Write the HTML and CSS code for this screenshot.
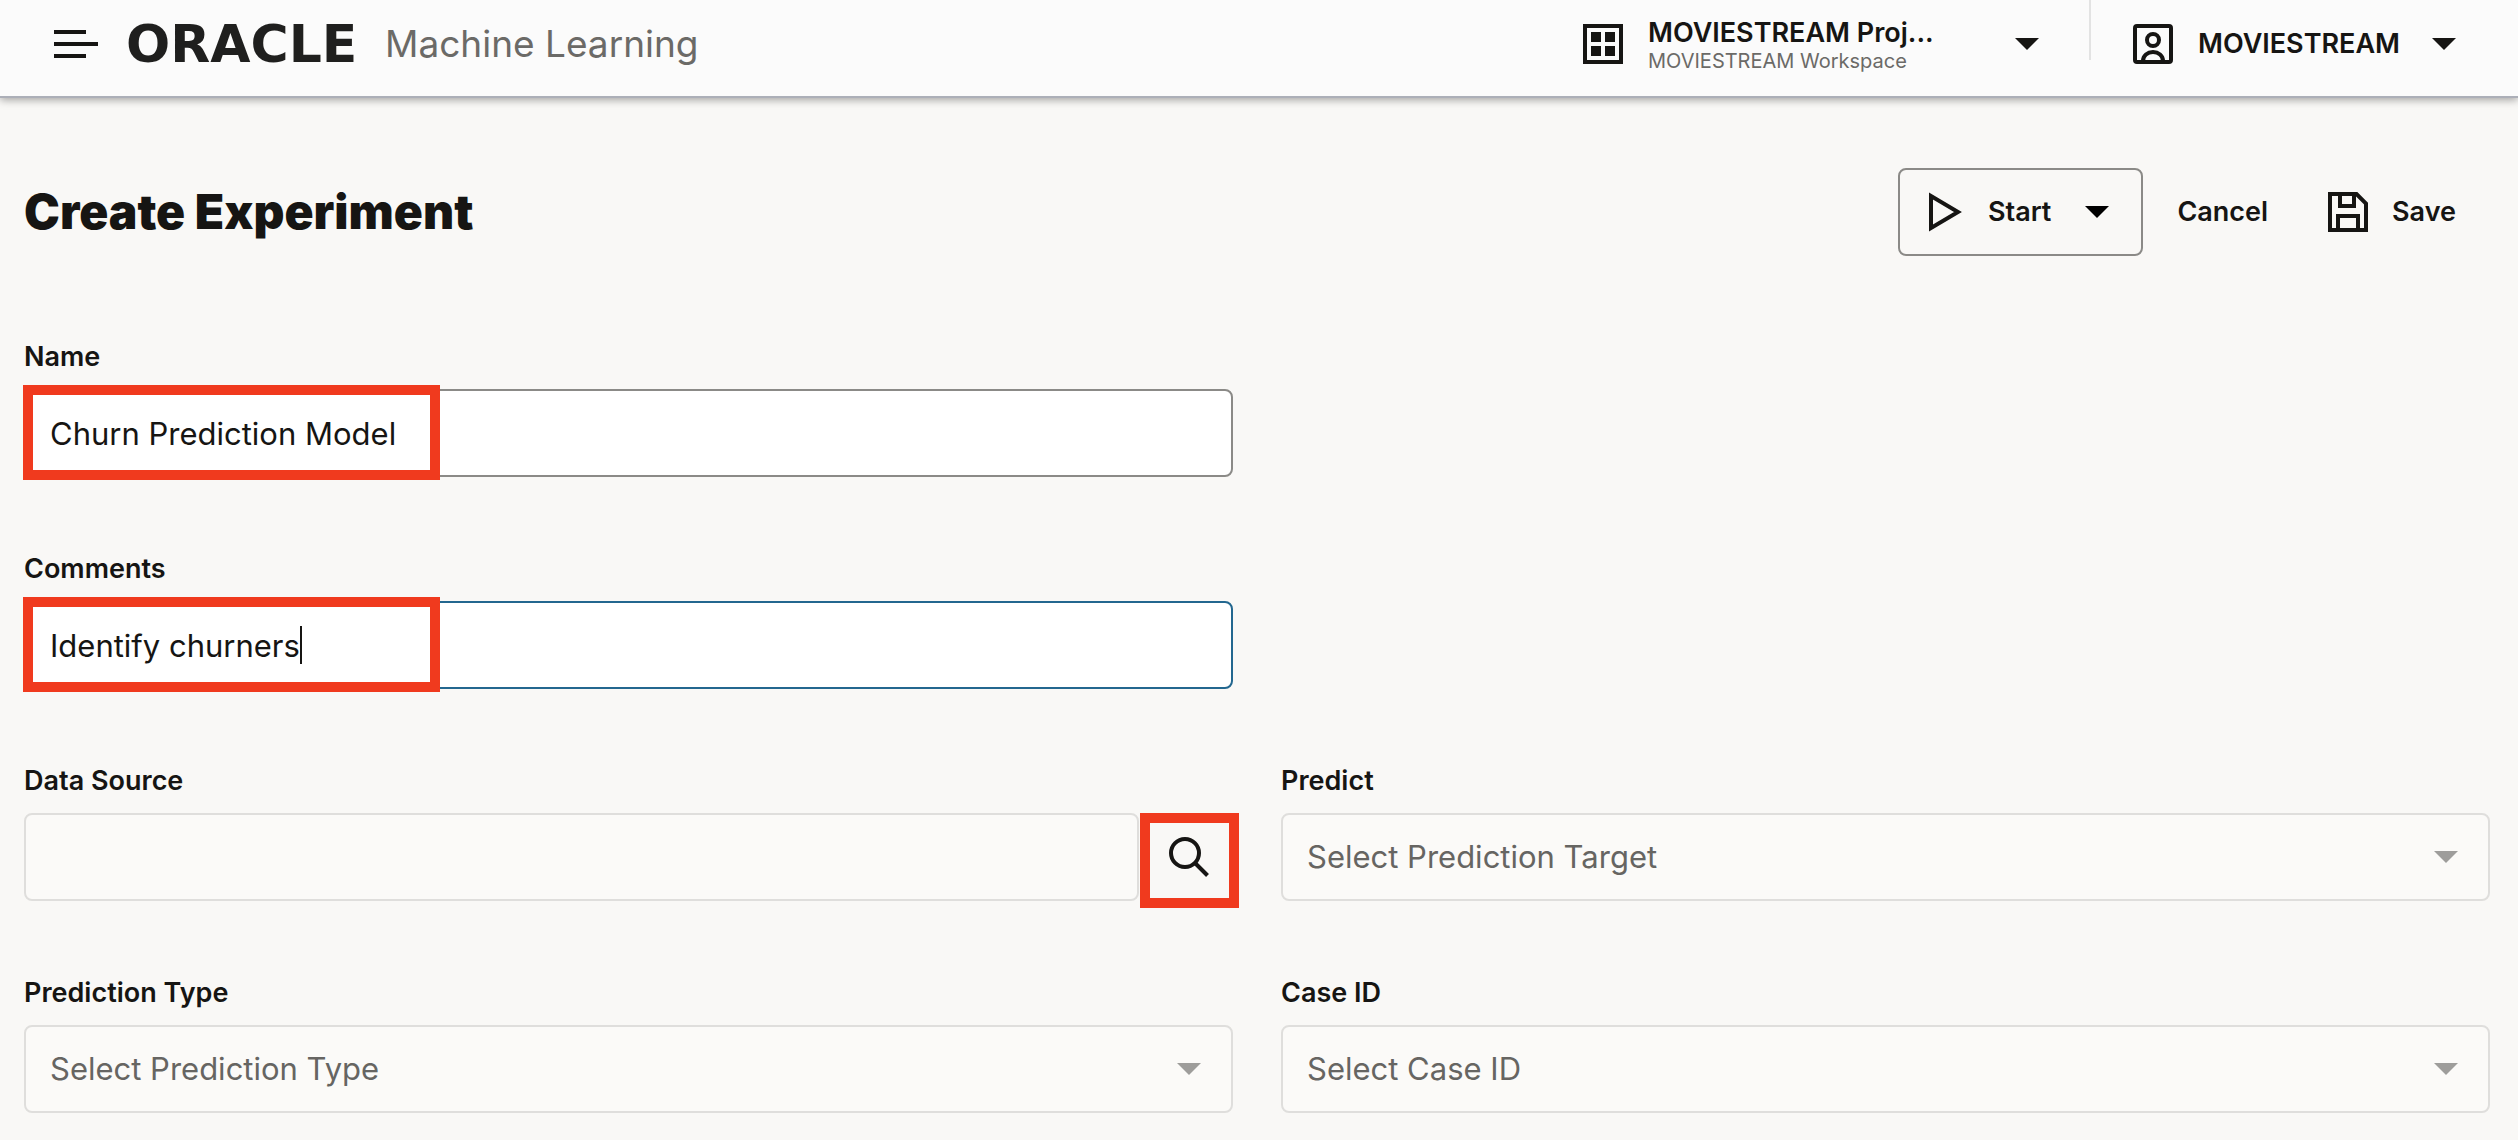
FILE: index.html
```html
<!DOCTYPE html>
<html lang="en">
<head>
  <meta charset="utf-8">
  <meta name="viewport" content="width=device-width, initial-scale=1">
  <title>Create Experiment - Oracle Machine Learning</title>
  <link rel="stylesheet" href="styles.css">
</head>
<body>
  <header class="topbar">
    <button class="bar-button menu-button" type="button" aria-label="Open navigation">
      <svg width="44" height="28" viewBox="0 0 44 28" aria-hidden="true"><path d="M0 0h32v4H0zM0 12h44v4H0zM0 24h32v4H0z"/></svg>
    </button>
    <a class="brand" href="#">
      <span class="brand-name">ORACLE</span>
      <span class="brand-product">Machine Learning</span>
    </a>
    <button class="bar-button project-button" type="button">
      <svg width="40" height="40" viewBox="0 0 40 40" aria-hidden="true"><path fill-rule="evenodd" d="M0 0h40v40H0zM4 4v32h32V4zM8 8h10v10H8zM22 8h10v10H22zM8 22h10v10H8zM22 22h10v10H22z"/></svg>
      <span class="project-text">
        <span class="project-name">MOVIESTREAM Proj...</span>
        <span class="project-workspace">MOVIESTREAM Workspace</span>
      </span>
      <svg class="caret" width="24" height="12" viewBox="0 0 24 12" aria-hidden="true"><path d="M0 0h24L12 12z"/></svg>
    </button>
    <span class="divider"></span>
    <button class="bar-button user-button" type="button">
      <svg width="40" height="40" viewBox="0 0 40 40" fill="none" stroke="#161513" stroke-width="4" aria-hidden="true"><rect x="2" y="2" width="36" height="36" rx="2"/><circle cx="20" cy="16" r="6"/><path d="M10 37c0-5.500 4.500-9 10-9s10 3.500 10 9"/></svg>
      <span class="user-name">MOVIESTREAM</span>
      <svg class="caret" width="24" height="12" viewBox="0 0 24 12" aria-hidden="true"><path d="M0 0h24L12 12z"/></svg>
    </button>
  </header>

  <main class="page">
    <div class="page-head">
      <h1 class="page-title">Create Experiment</h1>
      <div class="actions">
        <button class="action action-outlined" type="button">
          <svg width="36" height="40" viewBox="0 0 36 40" fill="none" stroke="#161513" stroke-width="4" aria-hidden="true"><path d="M3 4v32l27-16z"/></svg>
          <span>Start</span>
          <svg class="caret start-caret" width="24" height="12" viewBox="0 0 24 12" aria-hidden="true"><path d="M0 0h24L12 12z"/></svg>
        </button>
        <button class="action" type="button">Cancel</button>
        <button class="action action-save" type="button">
          <svg width="40" height="40" viewBox="0 0 40 40" fill="none" stroke="#161513" stroke-width="4" aria-hidden="true"><path d="M2 2h26.500L38 11.500V38H2z"/><path d="M12 2v12h14V2M10 38V24h20v14"/></svg>
          <span>Save</span>
        </button>
      </div>
    </div>

    <form class="form">
      <div class="field field-first">
        <label class="label" for="name">Name</label>
        <div class="control">
          <input class="box" id="name" type="text" value="Churn Prediction Model">
          <span class="highlight"></span>
        </div>
      </div>
      <div class="field field-first">
        <label class="label" for="comments">Comments</label>
        <div class="control">
          <input class="box box-active" id="comments" type="text" value="Identify churners">
          <span class="text-cursor"></span>
          <span class="highlight"></span>
        </div>
      </div>
      <div class="field field-first">
        <label class="label" for="source">Data Source</label>
        <div class="control control-search">
          <input class="box box-quiet" id="source" type="text" readonly>
          <button class="search-button" type="button" aria-label="Search data source">
            <svg width="40" height="40" viewBox="0 0 40 40" fill="none" stroke="#161513" stroke-width="4" aria-hidden="true"><circle cx="16" cy="16" r="14"/><path d="M26 26l12.500 12.500"/></svg>
          </button>
        </div>
      </div>
      <div class="field">
        <label class="label" for="predict">Predict</label>
        <div class="control control-select">
          <select class="box box-quiet" id="predict"><option>Select Prediction Target</option></select>
          <svg class="select-caret" width="24" height="12" viewBox="0 0 24 12" aria-hidden="true"><path d="M0 0h24L12 12z"/></svg>
        </div>
      </div>
      <div class="field">
        <label class="label" for="type">Prediction Type</label>
        <div class="control control-select">
          <select class="box box-quiet" id="type"><option>Select Prediction Type</option></select>
          <svg class="select-caret" width="24" height="12" viewBox="0 0 24 12" aria-hidden="true"><path d="M0 0h24L12 12z"/></svg>
        </div>
      </div>
      <div class="field">
        <label class="label" for="case">Case ID</label>
        <div class="control control-select">
          <select class="box box-quiet" id="case"><option>Select Case ID</option></select>
          <svg class="select-caret" width="24" height="12" viewBox="0 0 24 12" aria-hidden="true"><path d="M0 0h24L12 12z"/></svg>
        </div>
      </div>
    </form>
  </main>
</body>
</html>
```
FILE: styles.css
```css
* {
  box-sizing: border-box;
}

body {
  margin: 0;
  background: #f9f8f6;
  color: #161513;
  font-family: Inter, "Liberation Sans", sans-serif;
  font-size: 27px;
  line-height: 32px;
}

svg {
  display: block;
  flex: none;
}

button {
  border: 0;
  padding: 0;
  background: none;
  color: inherit;
  font: inherit;
  font-weight: 600;
}

/* Top bar */
.topbar {
  display: flex;
  align-items: center;
  height: 98px;
  padding: 0 62px 8px 54px;
  background: #fbfbfb;
  border-bottom: 2px solid #acafb8;
  box-shadow: 0 2px 8px rgba(0, 0, 0, 0.35);
}

.bar-button {
  display: flex;
  align-items: center;
  fill: #161513;
}

.brand {
  display: flex;
  align-items: center;
  margin-left: 28px;
  margin-right: auto;
  color: #1f1f1e;
  text-decoration: none;
  line-height: 56px;
}

.brand-name {
  min-width: 259px;
  font-family: "DejaVu Sans", sans-serif;
  font-size: 52px;
  font-weight: 700;
}

.brand-product {
  color: #6b6a67;
  font-size: 37px;
}

.project-text {
  display: flex;
  flex-direction: column;
  width: 367px;
  margin-left: 25px;
  padding-top: 2px;
  text-align: left;
}

.project-name {
  line-height: 32px;
}

.project-workspace {
  color: #6b6a67;
  font-size: 20px;
  font-weight: 400;
  line-height: 24px;
}

.divider {
  align-self: flex-start;
  width: 2px;
  height: 60px;
  margin: 0 42px 0 50px;
  background: #e3e3e3;
}

.user-name {
  margin: 0 32px 0 25px;
}

/* Title row */
.page {
  padding: 70px 28px 28px 24px;
}

.page-head {
  display: flex;
  align-items: center;
  justify-content: space-between;
  padding-right: 34px;
}

.page-title {
  margin: 0;
  font-size: 48px;
  font-weight: 900;
  line-height: 56px;
}

.actions {
  display: flex;
  align-items: center;
  gap: 34px;
}

.action {
  display: flex;
  align-items: center;
  height: 88px;
  gap: 24px;
}

.action-outlined {
  padding: 0 32px 0 28px;
  border: 2px solid #8b8a87;
  border-radius: 8px;
}

.start-caret {
  margin-left: 10px;
}

.action-save {
  margin-left: 26px;
}

/* Form */
.form {
  display: grid;
  grid-template-columns: 1fr 1fr;
  gap: 68px 48px;
  margin-top: 77px;
}

.field-first {
  grid-column: 1;
}

.label {
  display: block;
  height: 56px;
  line-height: 48px;
  font-weight: 600;
}

.control {
  position: relative;
}

.box {
  display: block;
  width: 100%;
  height: 88px;
  padding: 0 24px;
  border: 2px solid #8b8a87;
  border-radius: 8px;
  background: #fff;
  color: #161513;
  font: inherit;
  font-size: 31px;
  line-height: 40px;
  appearance: none;
}

.box-active {
  border-color: #23678f;
}

.box-quiet {
  border-color: #dfdedc;
  background: #fbfaf8;
  color: #666562;
}

.control-select {
  display: grid;
  align-items: center;
}

.control-select > * {
  grid-area: 1 / 1;
}

.select-caret {
  justify-self: end;
  margin-right: 32px;
  fill: #9e9d9b;
  pointer-events: none;
}

.control-search {
  display: flex;
  gap: 1px;
}

.control-search .box {
  flex: 1;
}

.search-button {
  display: grid;
  place-items: center;
  width: 99px;
  height: 95px;
  margin: 0 -6px -7px 0;
  padding: 0 2px 7px 0;
  border: 10px solid #f03a1e;
}

/* Marker drawn over the filled part of a field */
.highlight {
  position: absolute;
  top: -4px;
  left: -1px;
  width: 417px;
  height: 95px;
  border: 10px solid #f03a1e;
  pointer-events: none;
}

.text-cursor {
  position: absolute;
  top: 25px;
  left: 276px;
  width: 2px;
  height: 38px;
  background: #161513;
}
```
